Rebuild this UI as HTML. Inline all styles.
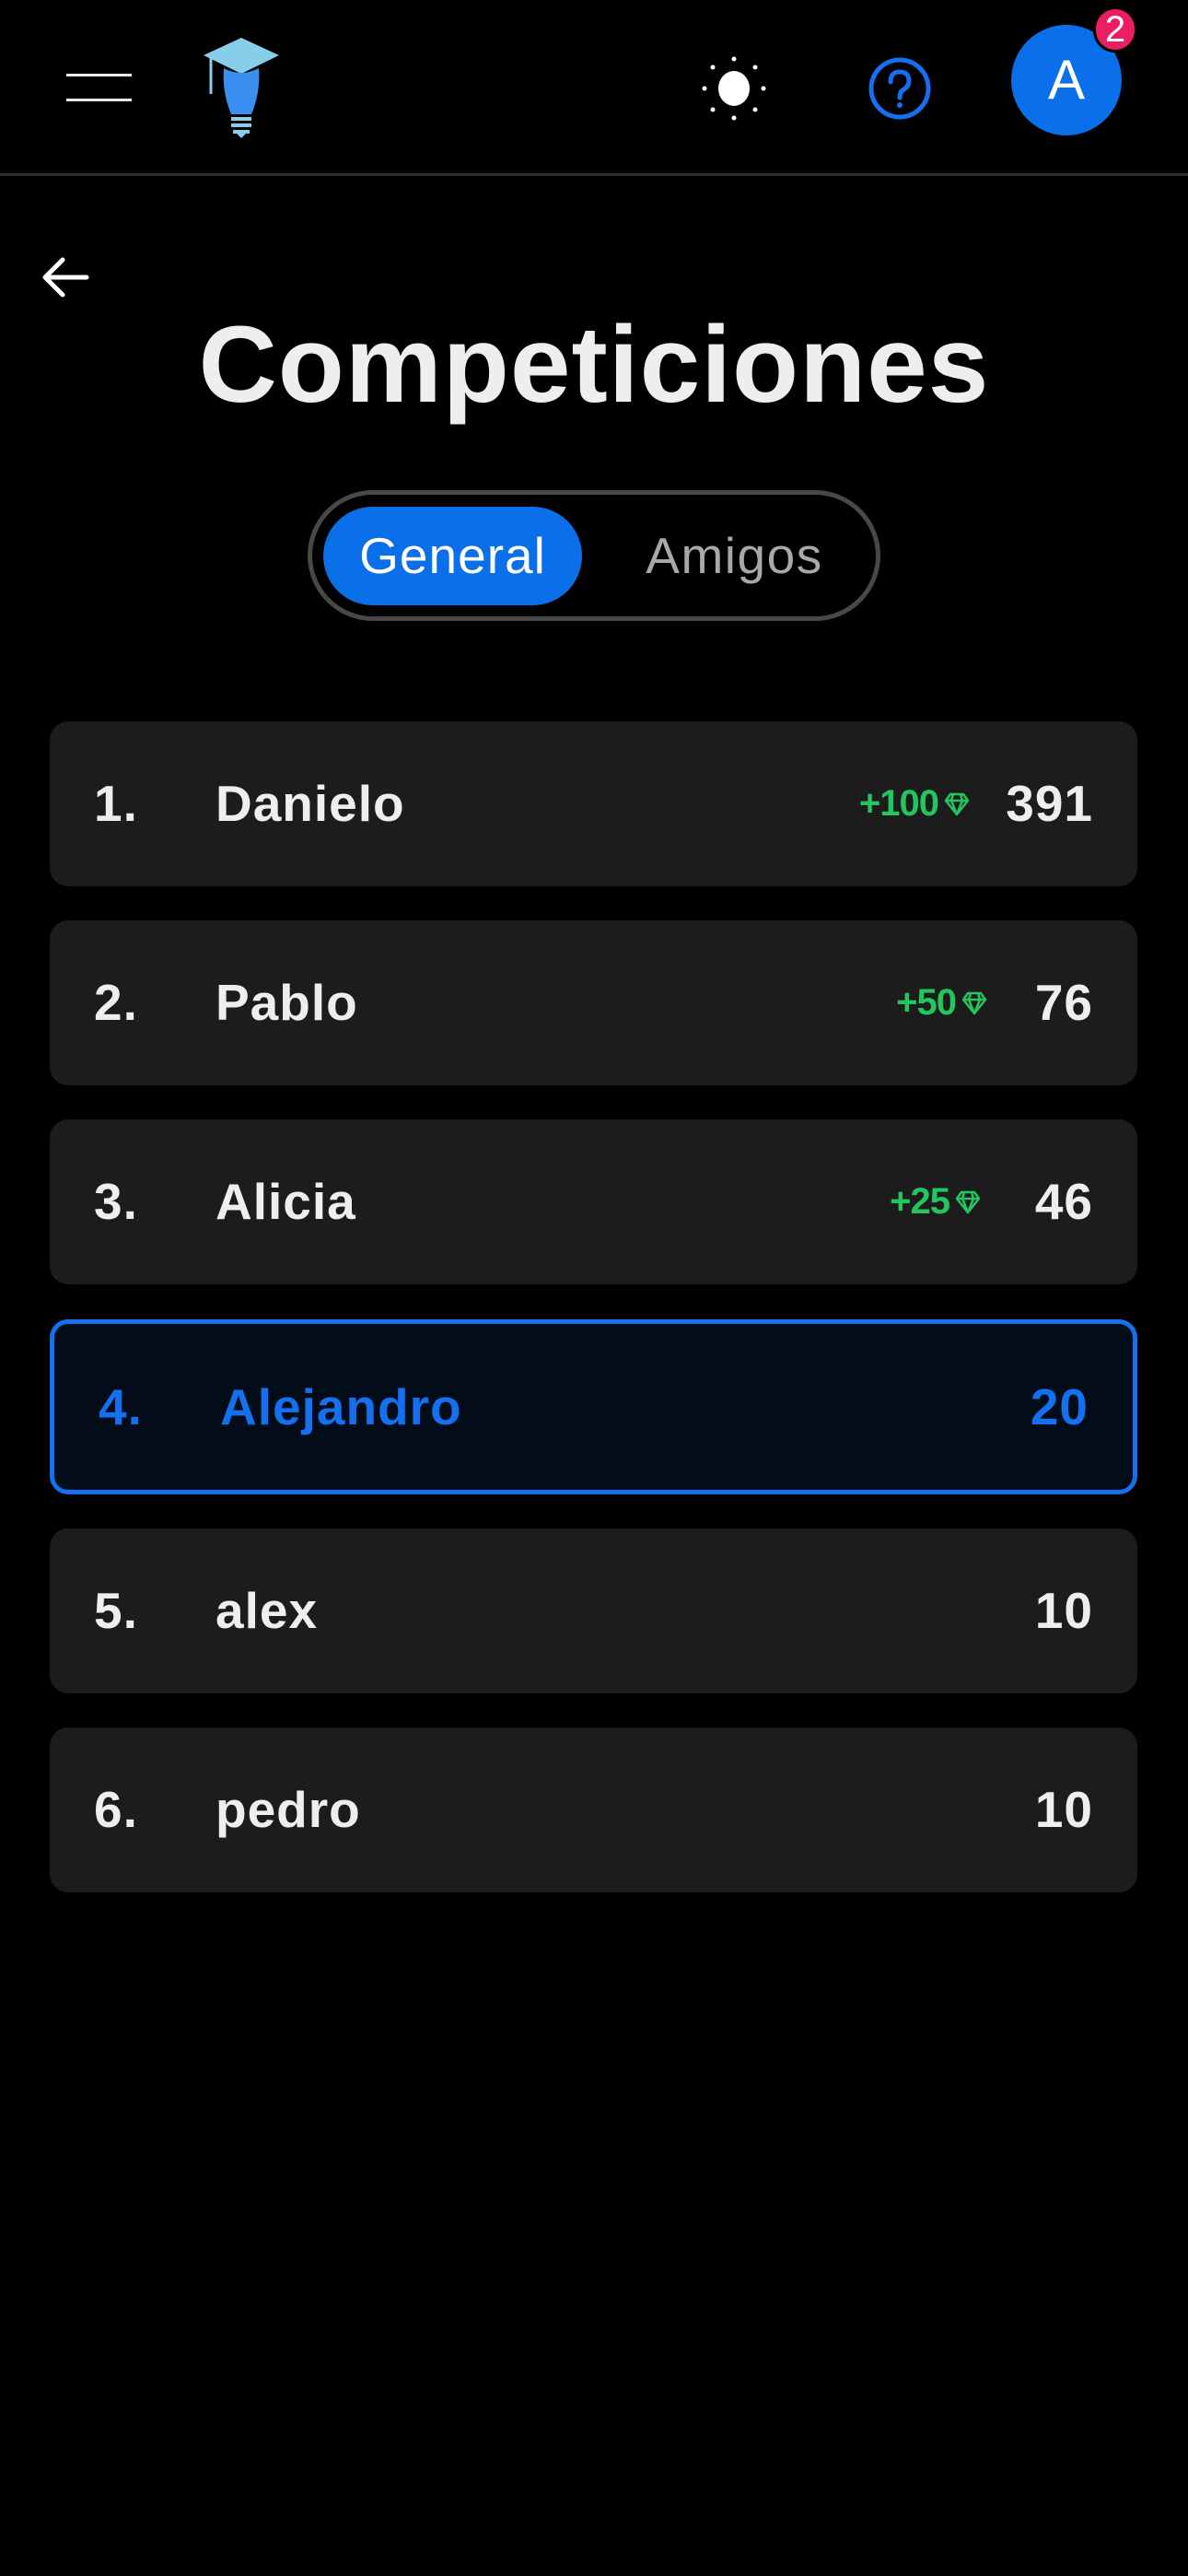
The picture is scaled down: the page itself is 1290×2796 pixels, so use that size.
<!DOCTYPE html>
<html><head><meta charset="utf-8"><style>
*{margin:0;padding:0;box-sizing:border-box}
body{width:1290px;height:2796px;background:#000;font-family:"Liberation Sans",sans-serif;color:#eee;position:relative;overflow:hidden}
.abs{position:absolute}
.hdr{position:absolute;left:0;top:0;width:1290px;height:191px;border-bottom:3px solid #2e2e2e}
.ham{position:absolute;left:72px;width:71px;height:3px;background:#e8e8e8}
h1{position:absolute;left:0;width:1290px;top:328px;text-align:center;font-size:118px;font-weight:bold;color:#eee;letter-spacing:1px}
.tog{position:absolute;left:334px;top:532px;width:622px;height:142px;border:5px solid #484848;border-radius:71px}
.pill{position:absolute;left:351px;top:550px;width:281px;height:107px;background:#0b6fe9;border-radius:54px;color:#fff;font-size:55px;text-align:center;line-height:107px;letter-spacing:1px}
.ami{position:absolute;left:660px;top:550px;width:275px;line-height:107px;text-align:center;color:#a8a8a8;font-size:55px;letter-spacing:1.5px}
.row{position:absolute;left:54px;width:1181px;height:179px;background:#1c1c1c;border-radius:20px;font-weight:bold;font-size:55px;letter-spacing:1px}
.row .rk{position:absolute;left:48px;top:0;line-height:179px}
.row .nm{position:absolute;left:180px;top:0;line-height:179px}
.row .sc{position:absolute;right:48px;top:0;line-height:179px}
.row .bn{position:absolute;top:0;line-height:179px;color:#22c55e;font-size:40px;display:flex;align-items:center;height:179px;gap:6px;letter-spacing:-1px}
.me{background:#030c19;border:5px solid #1570ef;color:#1570ef;height:190px}
.me .rk,.me .nm,.me .sc{line-height:180px}
</style></head><body>
<div class="hdr"></div>
<div class="ham" style="top:80px"></div>
<div class="ham" style="top:107px"></div>
<svg class="abs" style="left:215px;top:38px" width="95" height="112" viewBox="0 0 95 112">
<polygon points="47,3 88,22 47,42 6,22" fill="#87ceeb"/>
<line x1="14" y1="24" x2="14" y2="64" stroke="#87ceeb" stroke-width="3"/>
<path d="M28,36 Q47,46 66,36 Q68,62 58,86 L36,86 Q26,62 28,36Z" fill="#3a8ff0"/>
<rect x="36" y="89" width="22" height="4" fill="#87ceeb"/>
<rect x="36" y="96" width="22" height="4" fill="#87ceeb"/>
<rect x="38" y="103" width="18" height="4" fill="#87ceeb"/>
<polygon points="42,107 52,107 47,112" fill="#87ceeb"/>
</svg>
<svg class="abs" style="left:762px;top:61px" width="70" height="70" viewBox="0 0 70 70">
<ellipse cx="35" cy="35" rx="17" ry="19" fill="#fff"/>
<g fill="#fff"><circle cx="35" cy="3" r="2.5"/><circle cx="35" cy="67" r="2.5"/><circle cx="3" cy="35" r="2.5"/><circle cx="67" cy="35" r="2.5"/><circle cx="12" cy="12" r="2.5"/><circle cx="58" cy="12" r="2.5"/><circle cx="12" cy="58" r="2.5"/><circle cx="58" cy="58" r="2.5"/></g>
</svg>
<svg class="abs" style="left:942px;top:61px" width="70" height="70" viewBox="0 0 70 70">
<circle cx="35" cy="35" r="31" fill="none" stroke="#1570ef" stroke-width="5"/>
<path d="M25,28 Q25,17 35,17 Q45,17 45,27 Q45,33 38,37 Q35,39 35,45" fill="none" stroke="#1570ef" stroke-width="5" stroke-linecap="round"/>
<circle cx="35" cy="53" r="3" fill="#1570ef"/>
</svg>
<div class="abs" style="left:1098px;top:27px;width:120px;height:120px;border-radius:60px;background:#0b6fe9;color:#fff;font-size:60px;text-align:center;line-height:120px">A</div>
<div class="abs" style="left:1187px;top:7px;width:48px;height:50px;border-radius:25px;background:#e91e63;border:3px solid #000;color:#fff;font-size:40px;text-align:center;line-height:44px">2</div>
<svg class="abs" style="left:44px;top:276px" width="55" height="50" viewBox="0 0 55 50">
<path d="M50,25 L6,25 M24,6 L5,25 L24,44" fill="none" stroke="#fff" stroke-width="5" stroke-linecap="round" stroke-linejoin="round"/>
</svg>
<h1>Competiciones</h1>
<div class="tog"></div>
<div class="pill">General</div>
<div class="ami">Amigos</div>

<div class="row" style="top:783px"><span class="rk">1.</span><span class="nm">Danielo</span>
<span class="bn" style="right:182px">+100<svg width="28" height="26" viewBox="0 0 28 26"><path d="M7,2 L21,2 L26,9 L14,24 L2,9Z M2,9 L26,9 M10,2 L8,9 L14,24 M18,2 L20,9 L14,24" fill="none" stroke="#22c55e" stroke-width="2.5" stroke-linejoin="round"/></svg></span>
<span class="sc">391</span></div>
<div class="row" style="top:999px"><span class="rk">2.</span><span class="nm">Pablo</span>
<span class="bn" style="right:163px">+50<svg width="28" height="26" viewBox="0 0 28 26"><path d="M7,2 L21,2 L26,9 L14,24 L2,9Z M2,9 L26,9 M10,2 L8,9 L14,24 M18,2 L20,9 L14,24" fill="none" stroke="#22c55e" stroke-width="2.5" stroke-linejoin="round"/></svg></span>
<span class="sc">76</span></div>
<div class="row" style="top:1215px"><span class="rk">3.</span><span class="nm">Alicia</span>
<span class="bn" style="right:170px">+25<svg width="28" height="26" viewBox="0 0 28 26"><path d="M7,2 L21,2 L26,9 L14,24 L2,9Z M2,9 L26,9 M10,2 L8,9 L14,24 M18,2 L20,9 L14,24" fill="none" stroke="#22c55e" stroke-width="2.5" stroke-linejoin="round"/></svg></span>
<span class="sc">46</span></div>
<div class="row me" style="top:1432px"><span class="rk" style="left:48px">4.</span><span class="nm" style="left:180px">Alejandro</span><span class="sc">20</span></div>
<div class="row" style="top:1659px"><span class="rk">5.</span><span class="nm">alex</span><span class="sc">10</span></div>
<div class="row" style="top:1875px"><span class="rk">6.</span><span class="nm">pedro</span><span class="sc">10</span></div>
</body></html>
